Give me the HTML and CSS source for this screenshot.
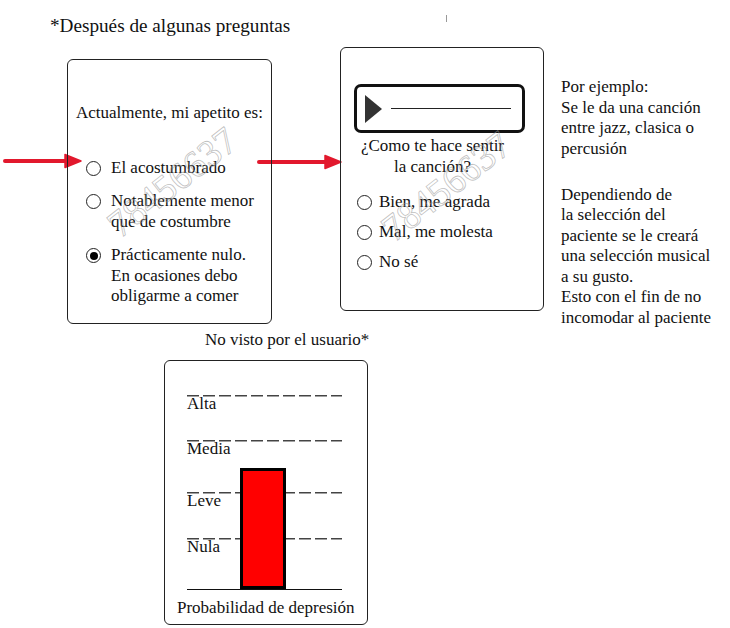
FILE: index.html
```html
<!DOCTYPE html>
<html lang="es">
<head>
    <meta charset="UTF-8">
    <title>Cuestionario de apetito y música</title>
    <link rel="stylesheet" href="styles.css">
</head>
<body>
<div class="canvas">
    <p class="title">*Después de algunas preguntas</p>
    <span class="tick"></span>

    <!-- flechas rojas -->
    <svg class="arrow arrow-one" width="80" height="16" viewBox="0 0 80 16">
        <path d="M2 8 H66" stroke="#e2182d" stroke-width="4" stroke-linecap="round"/>
        <path d="M62 1.5 L78 8 L62 14.5 Z" fill="#e2182d" stroke="#e2182d" stroke-width="1.5" stroke-linejoin="round"/>
    </svg>
    <svg class="arrow arrow-two" width="88" height="16" viewBox="0 0 88 16">
        <path d="M2 8 H72" stroke="#e2182d" stroke-width="4" stroke-linecap="round"/>
        <path d="M68 1.5 L84 8 L68 14.5 Z" fill="#e2182d" stroke="#e2182d" stroke-width="1.5" stroke-linejoin="round"/>
    </svg>

    <div class="card card-appetite">
        <p class="question">Actualmente, mi apetito es:</p>
        <ul class="options">
            <li><span class="radio"></span><span>El acostumbrado</span></li>
            <li><span class="radio"></span><span>Notablemente menor<br>que de costumbre</span></li>
            <li><span class="radio checked"></span><span>Prácticamente nulo.<br>En ocasiones debo<br>obligarme a comer</span></li>
        </ul>
        <span class="watermark">78456637</span>
    </div>

    <div class="card card-music">
        <div class="player">
            <span class="play"></span>
            <span class="track"></span>
        </div>
        <p class="question">¿Como te hace sentir<br>la canción?</p>
        <ul class="options tight">
            <li><span class="radio"></span><span>Bien, me agrada</span></li>
            <li><span class="radio"></span><span>Mal, me molesta</span></li>
            <li><span class="radio"></span><span>No sé</span></li>
        </ul>
        <span class="watermark">78456637</span>
    </div>

    <div class="note">
        <p>Por ejemplo:<br>Se le da una canción<br>entre jazz, clasica o<br>percusión</p>
        <p>Dependiendo de<br>la selección del<br>paciente se le creará<br>una selección musical<br>a su gusto.<br>Esto con el fin de no<br>incomodar al paciente</p>
    </div>

    <p class="hidden-note">No visto por el usuario*</p>

    <div class="card card-chart">
        <div class="chart">
            <div class="level level-high">Alta</div>
            <div class="level level-mid">Media</div>
            <div class="level level-low">Leve</div>
            <div class="level">Nula</div>
            <div class="bar" style="height: 121px"></div>
        </div>
        <p class="caption">Probabilidad de depresión</p>
    </div>
</div>
</body>
</html>
```

FILE: styles.css
```css
body {
    margin: 0;
    font-family: "Liberation Serif", "Times New Roman", serif;
    font-size: 17px;
    line-height: 20.5px;
    color: #111;
    background-color: #fff;
}

p {
    margin: 0;
}

.canvas {
    position: relative;
    width: 730px;
    height: 628px;
    overflow: hidden;
}

.title {
    position: absolute;
    left: 50px;
    top: 14px;
    font-size: 19.2px;
    line-height: 24px;
}

.tick {
    position: absolute;
    left: 446px;
    top: 15px;
    width: 1px;
    height: 7px;
    background: #999;
}

.arrow {
    position: absolute;
}

.arrow-one {
    left: 3px;
    top: 153px;
}

.arrow-two {
    left: 257px;
    top: 154px;
}

.card {
    position: absolute;
    box-sizing: border-box;
    border: 1.5px solid #222;
    border-radius: 6px;
    overflow: hidden;
}

.card-appetite {
    left: 67px;
    top: 59px;
    width: 205px;
    height: 265px;
    padding: 43px 0 0 0;
}

.card-appetite .question {
    text-align: center;
    margin-bottom: 34px;
}

.options {
    list-style: none;
    margin: 0;
    padding: 0 0 0 18px;
    display: flex;
    flex-direction: column;
    gap: 13px;
}

.options li {
    display: flex;
    align-items: flex-start;
    gap: 10px;
}

.radio {
    flex: none;
    box-sizing: border-box;
    width: 15px;
    height: 15px;
    margin-top: 3px;
    border: 1.3px solid #222;
    border-radius: 50%;
    background: #fff;
    display: flex;
    align-items: center;
    justify-content: center;
}

.radio.checked::after {
    content: "";
    width: 8px;
    height: 8px;
    border-radius: 50%;
    background: #000;
}

.watermark {
    position: absolute;
    font-size: 38px;
    line-height: 38px;
    color: transparent;
    -webkit-text-stroke: 0.8px rgba(150, 150, 150, 0.6);
    transform: translate(-50%, -50%) rotate(-38deg);
    pointer-events: none;
}

.card-appetite .watermark {
    left: 104px;
    top: 122px;
}

.card-music {
    left: 340px;
    top: 47px;
    width: 204px;
    height: 264px;
    padding: 36px 0 0 13px;
}

.player {
    box-sizing: border-box;
    width: 171px;
    height: 49px;
    border: 3px solid #111;
    border-radius: 7px;
    display: flex;
    align-items: center;
    padding-left: 8px;
    gap: 9px;
}

.play {
    width: 0;
    height: 0;
    border-top: 14px solid transparent;
    border-bottom: 14px solid transparent;
    border-left: 17px solid #333;
}

.track {
    width: 120px;
    height: 1.5px;
    background: #222;
}

.card-music .question {
    width: 157px;
    text-align: center;
    margin-top: 3px;
    margin-bottom: 15px;
}

.options.tight {
    padding-left: 3px;
    gap: 9.5px;
}

.options.tight li {
    gap: 7px;
}

.card-music .watermark {
    left: 105px;
    top: 138px;
}

.note {
    position: absolute;
    left: 561px;
    top: 77px;
    display: flex;
    flex-direction: column;
    gap: 25.5px;
}

.hidden-note {
    position: absolute;
    left: 205px;
    top: 330px;
}

.card-chart {
    left: 164px;
    top: 360px;
    width: 204px;
    height: 265px;
    padding: 34px 0 0 22px;
}

.chart {
    position: relative;
    width: 155px;
    height: 194px;
    border-bottom: 1.5px solid #111;
    display: flex;
    flex-direction: column;
}

.level {
    height: 20px;
    line-height: 17px;
    background: repeating-linear-gradient(90deg, #444 0 12px, transparent 12px 16px) top left / 100% 1.5px no-repeat;
}

.level-high {
    margin-bottom: 25px;
}

.level-mid {
    margin-bottom: 32px;
}

.level-low {
    margin-bottom: 26px;
}

.bar {
    position: absolute;
    left: 53px;
    bottom: 0;
    box-sizing: border-box;
    width: 46px;
    background: #ff0000;
    border: 3.5px solid #000;
}

.card-chart .caption {
    margin: 8px 0 0 -10px;
}
```
